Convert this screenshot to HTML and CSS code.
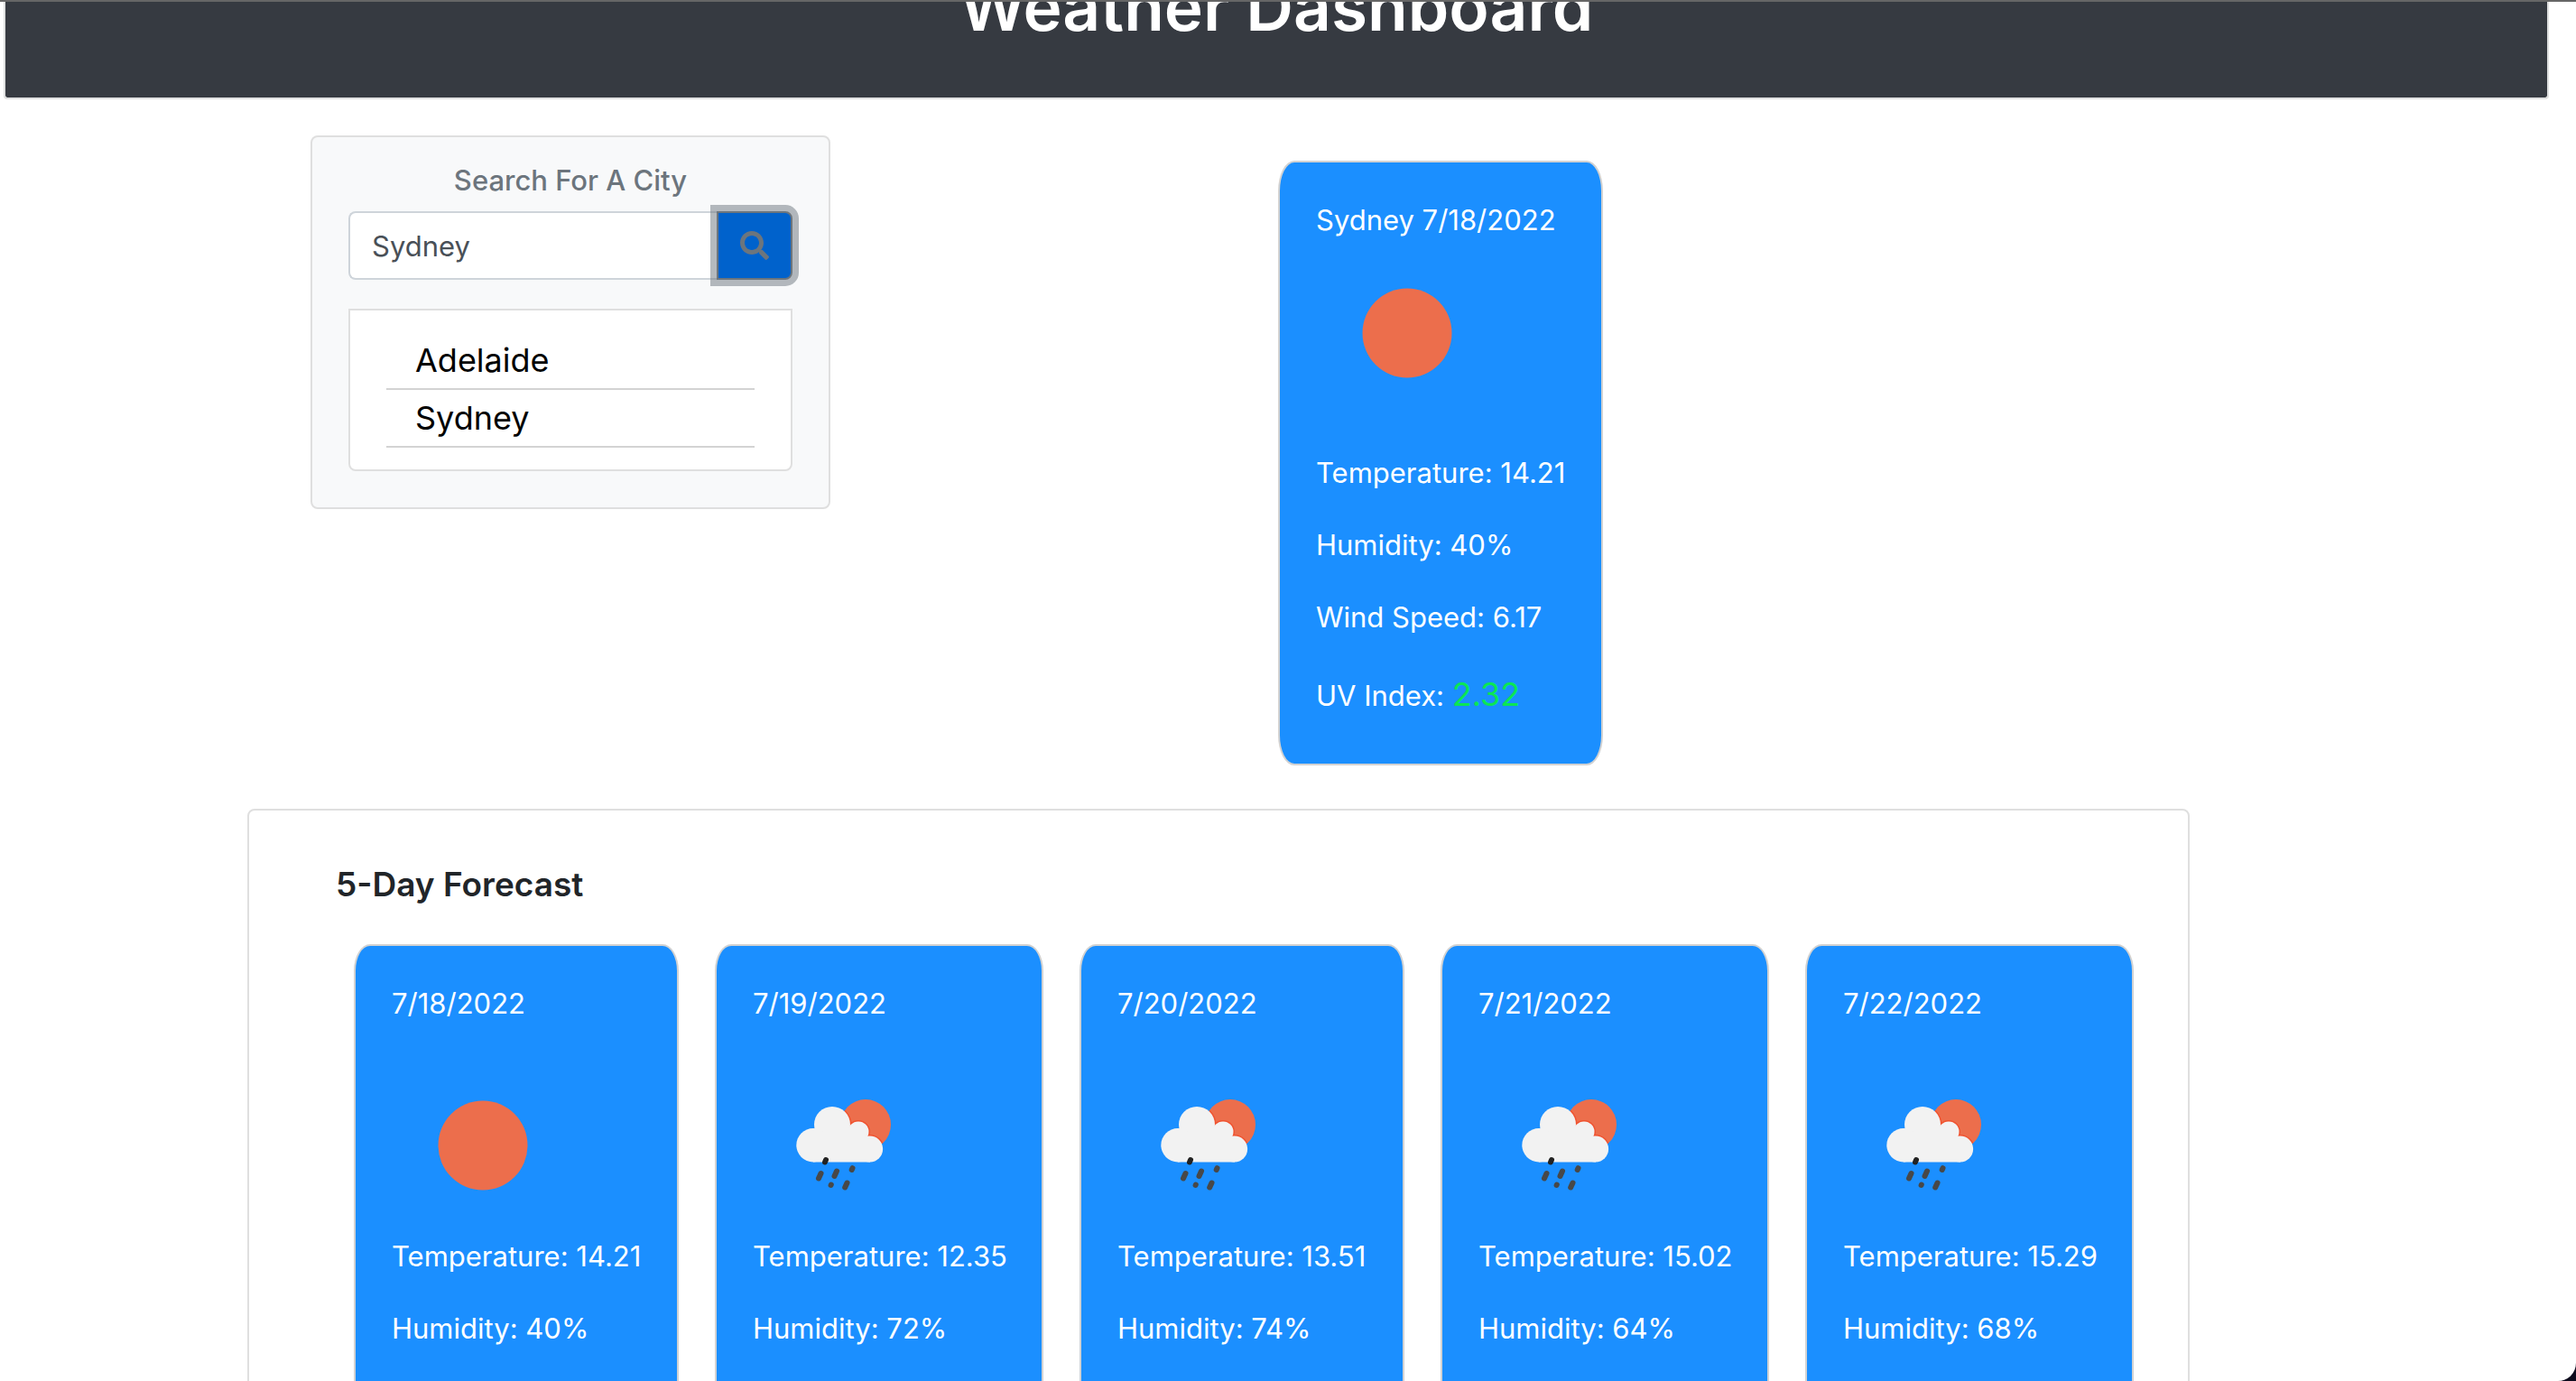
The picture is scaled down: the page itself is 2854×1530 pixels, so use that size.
FILE: index.html
```html
<!DOCTYPE html>
<html lang="en">
<head>
<meta charset="utf-8">
<meta name="viewport" content="width=device-width, initial-scale=1">
<title>Weather Dashboard</title>
<link rel="stylesheet" href="styles.css">
</head>
<body>
<svg class="defs" aria-hidden="true">
  <symbol id="clear" viewBox="0 0 200 200">
    <circle cx="101" cy="101" r="49.500" fill="#ec6e4c"/>
  </symbol>
  <symbol id="rain" viewBox="0 0 200 200">
    <clipPath id="sun-clip"><circle cx="125" cy="78" r="28"/></clipPath>
    <circle cx="125" cy="78" r="28" fill="#ec6e4c"/>
    <g clip-path="url(#sun-clip)" fill="#f0522f">
      <circle cx="88" cy="78" r="21.5"/>
      <circle cx="117" cy="86" r="13"/>
      <circle cx="129.7" cy="105" r="16"/>
    </g>
    <g fill="#f2f2f2">
      <circle cx="67" cy="100.7" r="18.7"/>
      <circle cx="88" cy="78" r="20"/>
      <circle cx="117" cy="86" r="11.5"/>
      <circle cx="129.7" cy="105" r="14.4"/>
      <path d="M67 90 80 85h37l13 10v24.4H67z"/>
    </g>
    <g stroke="#484848" stroke-width="6" stroke-linecap="round">
      <path d="M81 117l-1 2.500" stroke="#222"/>
      <path d="M75.500 132l-2.500 5.500"/>
      <path d="M93 129.500l-2.500 5.500"/>
      <path d="M110.500 126.200l-.8 1.800"/>
      <path d="M86.800 144.500l-.2.500"/>
      <path d="M104.500 142.500l-2.300 5"/>
    </g>
  </symbol>
</svg>
<div class="window">
  <div class="page">
    <header class="banner"><h1 class="banner-title">Weather Dashboard</h1></header>
    <main>
      <div class="overview">
        <section class="search">
          <label class="search-title" for="city">Search For A City</label>
          <form class="search-form">
            <input class="search-input" id="city" type="text" value="Sydney">
            <button class="search-button" type="button" aria-label="Search">
              <svg class="search-icon" viewBox="0 0 512 512"><path fill="currentColor" d="M505 442.700L405.300 343c-4.500-4.500-10.600-7-17-7H372c27.600-35.300 44-79.700 44-128C416 93.100 322.900 0 208 0S0 93.100 0 208s93.100 208 208 208c48.300 0 92.700-16.400 128-44v16.300c0 6.400 2.500 12.500 7 17l99.700 99.700c9.400 9.400 24.600 9.400 33.900 0l28.300-28.300c9.400-9.400 9.400-24.600.1-34zM208 336c-70.700 0-128-57.200-128-128 0-70.700 57.200-128 128-128 70.700 0 128 57.200 128 128 0 70.700-57.200 128-128 128z"/></svg>
            </button>
          </form>
          <ul class="history">
            <li class="history-item"><button class="history-button" type="button">Adelaide</button></li>
            <li class="history-item"><button class="history-button" type="button">Sydney</button></li>
          </ul>
        </section>
        <section class="card current">
          <p class="date">Sydney 7/18/2022</p>
          <svg class="weather-icon"><use href="#clear"/></svg>
          <p class="line">Temperature: 14.21</p>
          <p class="line">Humidity: 40%</p>
          <p class="line">Wind Speed: 6.17</p>
          <p class="line uv-line">UV Index: <span class="uv">2.32</span></p>
        </section>
      </div>
      <section class="forecast">
        <h2 class="forecast-title">5-Day Forecast</h2>
        <div class="days">
          <article class="card day">
            <p class="date">7/18/2022</p>
            <svg class="weather-icon"><use href="#clear"/></svg>
            <p class="line">Temperature: 14.21</p>
            <p class="line">Humidity: 40%</p>
          </article>
          <article class="card day">
            <p class="date">7/19/2022</p>
            <svg class="weather-icon"><use href="#rain"/></svg>
            <p class="line">Temperature: 12.35</p>
            <p class="line">Humidity: 72%</p>
          </article>
          <article class="card day">
            <p class="date">7/20/2022</p>
            <svg class="weather-icon"><use href="#rain"/></svg>
            <p class="line">Temperature: 13.51</p>
            <p class="line">Humidity: 74%</p>
          </article>
          <article class="card day">
            <p class="date">7/21/2022</p>
            <svg class="weather-icon"><use href="#rain"/></svg>
            <p class="line">Temperature: 15.02</p>
            <p class="line">Humidity: 64%</p>
          </article>
          <article class="card day">
            <p class="date">7/22/2022</p>
            <svg class="weather-icon"><use href="#rain"/></svg>
            <p class="line">Temperature: 15.29</p>
            <p class="line">Humidity: 68%</p>
          </article>
        </div>
      </section>
    </main>
  </div>
</div>
</body>
</html>
```
FILE: styles.css
```css
* { box-sizing: border-box; }

body {
  margin: 0;
  background: #0c0a1c;
  color: #212529;
  font: 400 31px/48px Inter, "Liberation Sans", sans-serif;
}

h1, h2, p, ul { margin: 0; padding: 0; }
button, input { font: inherit; }

.defs { position: absolute; width: 0; height: 0; }

.window {
  height: 100vh;
  overflow: hidden;
  border-top: 2px solid #666;
  border-bottom-right-radius: 20px;
  background: #fff;
}

/* The page is scrolled down past the top of the banner. */
.page { margin-top: -96px; }

.banner {
  margin: 0 30px 40px 4px;
  padding: 52px 0;
  border: 2px solid #dfe0e0;
  border-radius: 4px;
  background: #363a41;
  background-clip: padding-box;
  color: #fff;
  text-align: center;
}

.banner-title { font-size: 73px; font-weight: 600; line-height: 96px; }

.overview {
  display: flex;
  align-items: flex-start;
  gap: 496px;
  padding-left: 344px;
}

.search {
  width: 576px;
  padding: 28px 40px 40px;
  border: 2px solid #dfdfdf;
  border-radius: 8px;
  background: #f8f9fa;
}

.search-title {
  display: block;
  margin-bottom: 14px;
  color: #6c757d;
  font-weight: 500;
  line-height: 40px;
  text-align: center;
}

.search-form { display: flex; margin-bottom: 32px; }

.search-input {
  flex: 1;
  min-width: 0;
  height: 76px;
  padding: 12px 24px;
  border: 2px solid #ced4da;
  border-right: 0;
  border-radius: 8px 0 0 8px;
  background: #fff;
  color: #495057;
}

.search-button {
  display: flex;
  align-items: center;
  justify-content: center;
  width: 84px;
  padding: 0;
  border: 2px solid #6c757d;
  border-radius: 0 8px 8px 0;
  background: #0062cc;
  box-shadow: 0 0 0 7px rgba(108, 117, 125, .5);
  color: #6c757d;
}

.search-icon { width: 32px; height: 32px; }

.history {
  padding: 24px 40px;
  border: 2px solid #dfdfdf;
  border-radius: 0 0 8px 8px;
  background: #fff;
  list-style: none;
}

.history-item {
  height: 64px;
  border-bottom: 2px solid #d3d3d3;
}

.history-button {
  width: 100%;
  height: 62px;
  padding: 0 32px;
  border: 0;
  background: none;
  color: #000;
  font-size: 36px;
  text-align: left;
}

.card {
  padding: 40px;
  border: 2px solid #d2d2d2;
  border-radius: 5%;
  background: #1b8fff;
  color: #fff;
}

.current { width: 360px; margin-top: 28px; }

.date, .line { white-space: nowrap; }

.weather-icon { display: block; width: 200px; height: 200px; }

.current .weather-icon { margin-bottom: 32px; }

.day .weather-icon { margin-top: 32px; }

.line { margin-bottom: 32px; }

.uv-line { margin-bottom: 4px; line-height: 62px; }

.uv { color: #0be654; font-size: 36px; line-height: 36px; }

.forecast {
  margin: 48px 428px 0 274px;
  padding: 58px 60px 0 96px;
  border: 2px solid #dfdfdf;
  border-radius: 8px;
}

.forecast-title {
  margin-bottom: 42px;
  font-size: 37px;
  font-weight: 600;
  line-height: 48px;
}

.days {
  display: grid;
  grid-template-columns: 360fr 364fr 360fr 364fr 364fr;
  gap: 40px;
  padding-left: 20px;
}

.day { min-width: 0; height: 592px; }
```
